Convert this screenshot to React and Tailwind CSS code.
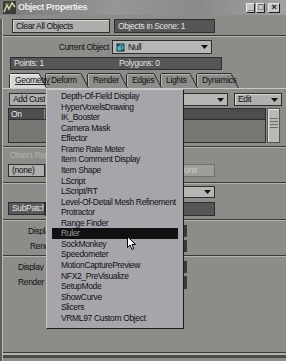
const menuItems = [
  "Depth-Of-Field Display",
  "HyperVoxelsDrawing",
  "IK_Booster",
  "Camera Mask",
  "Effector",
  "Frame Rate Meter",
  "Item Comment Display",
  "Item Shape",
  "LScript",
  "LScript/RT",
  "Level-Of-Detail Mesh Refinement",
  "Protractor",
  "Range Finder",
  "Ruler",
  "SockMonkey",
  "Speedometer",
  "MotionCapturePreview",
  "NFX2_PreVisualize",
  "SetupMode",
  "ShowCurve",
  "Slicers",
  "VRML97 Custom Object",
];

const tabs = [
  { label: "Geometry", w: 38, active: true },
  { label: "Deform", w: 44 },
  { label: "Render", w: 41 },
  { label: "Edges", w: 36 },
  { label: "Lights", w: 38 },
  { label: "Dynamics", w: 43 },
];

function Tri() {
  return (
    <svg width="7" height="4" viewBox="0 0 7 4">
      <path d="M0 0H7L3.5 4Z" fill="#111" />
    </svg>
  );
}

function Sep() {
  return (
    <div>
      <div className="h-px bg-[#3a3b38]" />
      <div className="h-px bg-[#b3b4b0]" />
    </div>
  );
}

function Tab({ label, w, active }) {
  return (
    <div className="relative -mr-[2px] flex h-[15px] items-center" style={{ width: w }}>
      <svg className="absolute inset-0" width={w} height="15" viewBox={`0 0 ${w} 15`}>
        <path d={`M0.5 15V1.5L1.5 0.5H${w - 8}L${w - 0.5} 15`} fill={active ? "#d6d6d4" : "#8c8d88"} stroke="#2e2e2e" />
        <path d={`M1.5 15V1.5H${w - 8}`} fill="none" stroke={active ? "#f0f0f0" : "#b4b5b1"} />
      </svg>
      <span className={`relative pl-[6px] ${active ? "underline decoration-[#222]" : ""}`}>{label}</span>
    </div>
  );
}

// label that disappears under the popup menu at x=46
function HiddenLabel({ pl, children }) {
  return (
    <span className="w-[43px] shrink-0 overflow-hidden whitespace-nowrap" style={{ paddingLeft: pl }}>
      {children}
    </span>
  );
}

export default function App() {
  return (
    <div className="relative h-[361px] w-[286px] overflow-hidden bg-[#8c8d88] font-['Liberation_Sans',Arial,sans-serif] text-[8.5px] leading-none tracking-[-0.35px] text-[#111]">
      {/* title bar */}
      <div className="flex h-[15px] items-center bg-[linear-gradient(90deg,#7a7a7a,#969696_40%,#8a8a8a_70%,#a2a2a2)] pl-[3px] pr-[6px]">
        <svg width="13" height="13" viewBox="0 0 13 13">
          <rect width="13" height="13" fill="#3b3d36" />
          <path d="M1 11L4 4L6 8L9 2L12 6" fill="none" stroke="#c9d7a8" strokeWidth="1.5" />
          <path d="M2 3H6" stroke="#8fa06a" />
        </svg>
        <span className="ml-[2px] text-[9px] font-bold text-[#ececec]">Object Properties</span>
        <div className="ml-auto flex gap-[1px]">
          {["_", "□", "×"].map((g, i) => (
            <div
              key={i}
              className={`flex h-[10px] items-center justify-center border border-t-[#e8e8e8] border-l-[#e8e8e8] border-r-[#222] border-b-[#222] bg-[#c4c4c4] text-[9px] font-bold text-[#111] ${i === 2 ? "ml-[2px] w-[12px]" : "w-[9px]"}`}
            >
              {g}
            </div>
          ))}
        </div>
      </div>

      <div className="h-[346px] border-l-2 border-l-[#5c5d59]">
        <div className="h-full border-l border-l-[#b9bab6]">
          {/* row 1 */}
          <div className="mt-[4px] flex h-[14px] gap-[4px] pl-[9px]">
            <div className="flex w-[98px] items-center border border-[#2e2e2e] bg-[#aeaeac] pl-[3px] shadow-[inset_1px_1px_0_#d6d6d6]">Clear All Objects</div>
            <div className="flex w-[101px] items-center border border-[#2e2e2e] bg-[#565656] pl-[3px] text-[#e2e2e2]">Objects in Scene: 1</div>
          </div>
          <div className="mt-[2px]">
            <Sep />
          </div>
          {/* row 2 */}
          <div className="mt-[3px] flex h-[14px] items-center">
            <div className="w-[109px] pr-[3px] text-right">Current Object</div>
            <div className="flex h-full w-[100px] items-center gap-[3px] border border-[#2e2e2e] bg-[#b6b6b4] px-[3px]">
              <svg width="9" height="9" viewBox="0 0 9 9">
                <rect x="0.5" y="0.5" width="8" height="8" fill="#2a2a2a" />
                <path d="M1.5 3L4 1.5H7.5V6L5.5 7.5H1.5Z" fill="#3fc6d6" />
                <path d="M1.5 3H5.5V7.5M5.5 3L7.5 1.5" fill="none" stroke="#0d4a52" strokeWidth="0.8" />
              </svg>
              <span>Null</span>
              <span className="ml-auto"><Tri /></span>
            </div>
          </div>
          {/* row 3 */}
          <div className="ml-[7px] mt-[3px] flex h-[13px] w-[212px] items-center border border-[#2e2e2e] bg-[#565656] pl-[3px] text-[#e2e2e2]">
            <span className="w-[105px]">Points: 1</span>
            <span>Polygons: 0</span>
          </div>
          {/* tabs */}
          <div className="relative mt-[3px] flex h-[15px] pl-[6px]">
            {tabs.map((t, i) => (
              <div key={t.label} style={{ zIndex: t.active ? 10 : 6 - i }} className="relative">
                <Tab {...t} />
              </div>
            ))}
          </div>
          <div className="h-px bg-[#c8c9c5]" />

          {/* tab content */}
          <div className="mt-[4px] flex h-[13px] items-stretch pl-[6px]">
            <div className="flex w-[80px] items-center border border-[#2e2e2e] bg-[#aeaeac] pl-[3px]">
              <span className="w-[32px] shrink-0 overflow-hidden whitespace-nowrap">Add Custom Object</span>
            </div>
            <div className="ml-[4px] flex w-[135px] items-center justify-end border border-[#2e2e2e] bg-[#b6b6b4] pr-[3px]">
              <Tri />
            </div>
            <div className="ml-[6px] flex w-[48px] items-center border border-[#2e2e2e] bg-[#b0b0ae] px-[3px] shadow-[inset_1px_1px_0_#d6d6d6]">
              <span>Edit</span>
              <span className="ml-auto"><Tri /></span>
            </div>
          </div>
          {/* list */}
          <div className="mt-[2px] flex h-[35px] pl-[5px]">
            <div className="flex w-[258px] flex-col border border-[#2e2e2e] bg-[#767773]">
              <div className="flex h-[11px] border-b border-[#2e2e2e] bg-[#4d4d4d]">
                <div className="flex w-[36px] items-center border-r border-[#8a8a8a] pl-[2px] text-[#e6e6e6]">On</div>
              </div>
            </div>
            <div className="ml-[1px] flex w-[13px] flex-col items-center border border-[#555] bg-[#b9bab6] shadow-[inset_1px_1px_0_#e2e2e2]">
              <div className="mt-[9px] flex flex-col gap-[2px]">
                {[0, 1, 2, 3].map((k) => (
                  <div key={k} className="h-px w-[8px] bg-[#6a6a6a]" />
                ))}
              </div>
            </div>
          </div>
          <div className="mt-[3px]">
            <Sep />
          </div>
          <div className="mt-[2px] flex h-[10px] items-center text-[#b2b3ae]">
            <HiddenLabel pl={7}>Object Replacement</HiddenLabel>
          </div>
          <div className="mt-[4px] flex h-[13px] pl-[5px]">
            <div className="flex w-[37px] items-center border border-[#2e2e2e] bg-[#aeaeac] pl-[3px]">(none)</div>
            <div className="flex w-[170px] items-center justify-end border border-[#6f706c] bg-[#9d9e9a] pr-[17px] text-[#c9cac6]">
              <div className="flex w-[13px] justify-end overflow-hidden whitespace-nowrap">
                <span>Options</span>
              </div>
            </div>
          </div>
          <div className="mt-[5px]">
            <Sep />
          </div>
          <div className="mt-[2px] flex h-[12px] pl-[43px]">
            <div className="flex w-[169px] items-center justify-end border border-[#2e2e2e] bg-[#b6b6b4] pr-[3px]">
              <Tri />
            </div>
          </div>
          <div className="mt-[4px] flex h-[14px] items-start pl-[5px]">
            <div className="flex h-[13px] w-[37px] items-center overflow-hidden whitespace-nowrap border border-[#2e2e2e] bg-[#595959] pl-[3px] text-[#e2e2e2]">SubPatch Order</div>
            <div className="h-[14px] w-[170px] border border-[#2e2e2e] bg-[#565656]" />
          </div>
          <div className="mt-[3px]">
            <Sep />
          </div>
          <div className="mt-[4px] flex h-[12px] items-center">
            <HiddenLabel pl={25}>Display SubPatch Level</HiddenLabel>
            <div className="ml-[138px] h-full w-[3px] bg-[#3a3a3a]" />
          </div>
          <div className="mt-[3px] flex h-[12px] items-center">
            <HiddenLabel pl={27}>Render SubPatch Level</HiddenLabel>
            <div className="ml-[138px] h-full w-[3px] bg-[#3a3a3a]" />
          </div>
          <div className="mt-[3px]">
            <Sep />
          </div>
          <div className="mt-[4px] flex h-[12px] items-center">
            <HiddenLabel pl={15}>Display Metaball Resolution</HiddenLabel>
            <div className="ml-[138px] h-full w-[3px] bg-[#3a3a3a]" />
          </div>
          <div className="mt-[3px] flex h-[13px] items-center">
            <HiddenLabel pl={15}>Render Metaball Resolution</HiddenLabel>
            <div className="ml-[138px] h-full w-[3px] bg-[#3a3a3a]" />
          </div>
          <div className="mt-[63px]">
            <div className="h-px bg-[#3a3b38]" />
            <div className="h-[2px] bg-[#b3b4b0]" />
            <div className="h-[3px] bg-[#4a4b47]" />
          </div>
        </div>
      </div>

      {/* popup menu */}
      <div className="absolute left-[46px] top-[89px] h-[240px] w-[138px] border border-b-[#1a1a1a] border-l-[#c8c8c8] border-r-[#1a1a1a] border-t-[#c8c8c8] bg-[#a6a5aa] pt-[1px]">
        {menuItems.map((m) => (
          <div
            key={m}
            className={`mx-[5px] flex h-[10.57px] items-center whitespace-nowrap pl-[9px] ${m === "Ruler" ? "bg-[#111] text-[#9a9a9a]" : ""}`}
          >
            {m}
          </div>
        ))}
      </div>

      {/* cursor */}
      <svg className="absolute left-[127px] top-[236px]" width="10" height="15" viewBox="0 0 10 15">
        <path d="M0.5 0.5V11.5L3 9L5 13.5L6.8 12.7L4.9 8.5H8.5Z" fill="#fff" stroke="#000" strokeWidth="1" />
      </svg>
    </div>
  );
}
